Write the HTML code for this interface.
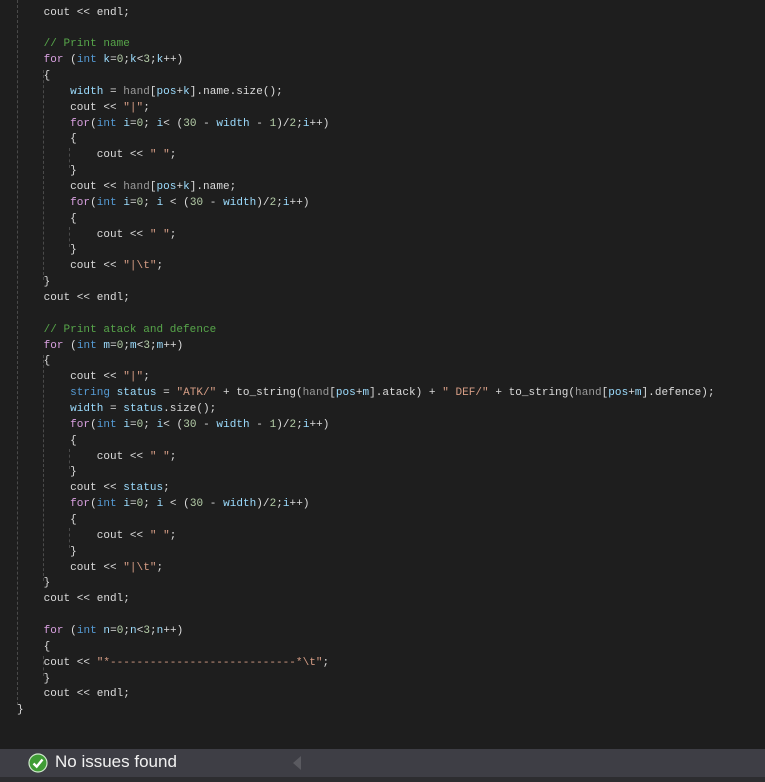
<!DOCTYPE html>
<html><head><meta charset="utf-8"><style>
body{margin:0;width:765px;height:782px;background:#1e1e1e;overflow:hidden;position:relative;font-family:"Liberation Mono",monospace}
pre{position:absolute;left:17px;top:5.5px;margin:0;font-size:11px;letter-spacing:0.04px;line-height:15.86px;color:#dcdcdc;font-family:"Liberation Mono",monospace}
.k{color:#569cd6}.f{color:#d8a0df}.v{color:#9cdcfe}.g{color:#9b9b9b}.s{color:#d69d85}.c{color:#57a64a}.n{color:#b5cea8}.e{color:#c8c8c8}
.gl{position:absolute;width:0;border-left:1px dashed #4a4a4a}
#bar{position:absolute;left:0;top:749px;width:765px;height:28px;background:#3e3e45}
#bot{position:absolute;left:0;top:777px;width:765px;height:5px;background:#2d2d30}
</style></head><body>
<div class="gl" style="left:17px;top:0;height:705px"></div>
<div class="gl" style="left:43px;top:70px;height:210px"></div>
<div class="gl" style="left:43px;top:355px;height:226px"></div>
<div class="gl" style="left:43px;top:656px;height:20px"></div>
<div class="gl" style="left:69px;top:148px;height:20px"></div>
<div class="gl" style="left:69px;top:227px;height:20px"></div>
<div class="gl" style="left:69px;top:449px;height:20px"></div>
<div class="gl" style="left:69px;top:528px;height:20px"></div>
<pre>    cout &lt;&lt; endl;

    <span class="c">// Print name</span>
    <span class="f">for</span> (<span class="k">int</span> <span class="v">k</span>=<span class="n">0</span>;<span class="v">k</span>&lt;<span class="n">3</span>;<span class="v">k</span>++)
    {
        <span class="v">width</span> = <span class="g">hand</span>[<span class="v">pos</span>+<span class="v">k</span>].name.size();
        cout &lt;&lt; <span class="s">"|"</span>;
        <span class="f">for</span>(<span class="k">int</span> <span class="v">i</span>=<span class="n">0</span>; <span class="v">i</span>&lt; (<span class="n">30</span> - <span class="v">width</span> - <span class="n">1</span>)/<span class="n">2</span>;<span class="v">i</span>++)
        {
            cout &lt;&lt; <span class="s">" "</span>;
        }
        cout &lt;&lt; <span class="g">hand</span>[<span class="v">pos</span>+<span class="v">k</span>].name;
        <span class="f">for</span>(<span class="k">int</span> <span class="v">i</span>=<span class="n">0</span>; <span class="v">i</span> &lt; (<span class="n">30</span> - <span class="v">width</span>)/<span class="n">2</span>;<span class="v">i</span>++)
        {
            cout &lt;&lt; <span class="s">" "</span>;
        }
        cout &lt;&lt; <span class="s">"|\t"</span>;
    }
    cout &lt;&lt; endl;

    <span class="c">// Print atack and defence</span>
    <span class="f">for</span> (<span class="k">int</span> <span class="v">m</span>=<span class="n">0</span>;<span class="v">m</span>&lt;<span class="n">3</span>;<span class="v">m</span>++)
    {
        cout &lt;&lt; <span class="s">"|"</span>;
        <span class="k">string</span> <span class="v">status</span> = <span class="s">"ATK/"</span> + to_string(<span class="g">hand</span>[<span class="v">pos</span>+<span class="v">m</span>].atack) + <span class="s">" DEF/"</span> + to_string(<span class="g">hand</span>[<span class="v">pos</span>+<span class="v">m</span>].defence);
        <span class="v">width</span> = <span class="v">status</span>.size();
        <span class="f">for</span>(<span class="k">int</span> <span class="v">i</span>=<span class="n">0</span>; <span class="v">i</span>&lt; (<span class="n">30</span> - <span class="v">width</span> - <span class="n">1</span>)/<span class="n">2</span>;<span class="v">i</span>++)
        {
            cout &lt;&lt; <span class="s">" "</span>;
        }
        cout &lt;&lt; <span class="v">status</span>;
        <span class="f">for</span>(<span class="k">int</span> <span class="v">i</span>=<span class="n">0</span>; <span class="v">i</span> &lt; (<span class="n">30</span> - <span class="v">width</span>)/<span class="n">2</span>;<span class="v">i</span>++)
        {
            cout &lt;&lt; <span class="s">" "</span>;
        }
        cout &lt;&lt; <span class="s">"|\t"</span>;
    }
    cout &lt;&lt; endl;

    <span class="f">for</span> (<span class="k">int</span> <span class="v">n</span>=<span class="n">0</span>;<span class="v">n</span>&lt;<span class="n">3</span>;<span class="v">n</span>++)
    {
    cout &lt;&lt; <span class="s">"*----------------------------*\t"</span>;
    }
    cout &lt;&lt; endl;
}</pre>
<div id="bar">
<svg style="position:absolute;left:28px;top:4px" width="20" height="20" viewBox="0 0 20 20"><circle cx="10" cy="10" r="9" fill="#3f9c35" stroke="#cfe8cc" stroke-width="1.2"/><path d="M5.5 10.5 L8.7 13.6 L14.5 6.5" fill="none" stroke="#fff" stroke-width="2.4"/></svg>
<div style="position:absolute;left:55px;top:3px;font-family:'Liberation Sans',sans-serif;font-size:17px;color:#f1f1f1">No issues found</div>
<svg style="position:absolute;left:293px;top:7px" width="10" height="14"><path d="M8 0 L0 7 L8 14Z" fill="#5a5a60"/></svg>
</div>
<div id="bot"></div>
</body></html>
